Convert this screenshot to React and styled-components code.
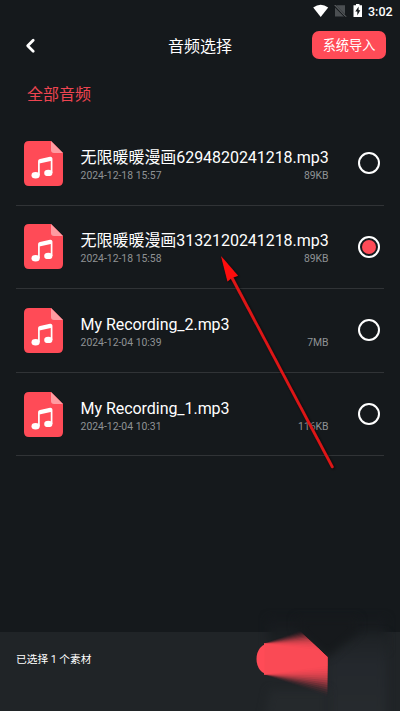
import styled, { createGlobalStyle } from "styled-components";

const GlobalStyle = createGlobalStyle`
  * {
    box-sizing: border-box;
    margin: 0;
    padding: 0;
  }

  body {
    background-color: #15191c;
    color: #fff;
    font-family: Roboto, "Noto Sans CJK SC", sans-serif;
    overflow: hidden;
  }

  button {
    border: none;
    background: none;
    color: inherit;
    font-family: inherit;
  }
`;

const StyledScreen = styled.div`
  position: relative;
  width: 400px;
  height: 711px;
  display: flex;
  flex-direction: column;
  background-color: #15191c;
  overflow: hidden;
`;

const StyledStatusBar = styled.div`
  height: 22px;
  padding-right: 6px;
  display: flex;
  align-items: center;
  justify-content: flex-end;
`;

const StyledStatusIcons = styled.svg`
  width: 52px;
  height: 22px;
  margin-right: 3px;
`;

const StyledClock = styled.span`
  width: 26px;
  padding-top: 1px;
  font-size: 12.5px;
  line-height: 22px;
  font-weight: 500;
  white-space: nowrap;
`;

const StyledHeader = styled.header`
  height: 48px;
  padding: 0 14px 2px 16px;
  display: grid;
  grid-template-columns: 1fr 66px 1fr;
  align-items: center;
`;

const StyledBackButton = styled.button`
  width: 28px;
  height: 28px;
`;

const StyledPageTitle = styled.h1`
  padding-top: 3px;
  font-size: 16px;
  line-height: 24px;
  font-weight: 400;
`;

const StyledImportButton = styled.button`
  justify-self: end;
  width: 74px;
  height: 28px;
  padding-top: 1px;
  border-radius: 7px;
  background-color: #ff4b57;
  font-size: 13.2px;
  line-height: 27px;
  white-space: nowrap;
`;

const StyledSectionTitle = styled.h2`
  height: 52px;
  padding: 13px 27px 0;
  color: #ee4551;
  font-size: 16px;
  line-height: 24px;
  font-weight: 400;
`;

const StyledList = styled.ul`
  flex: 1;
  padding: 0 16px;
  list-style: none;
`;

const StyledTrack = styled.li`
  height: 83.6px;
  padding: 0 4px 0 8px;
  display: flex;
  align-items: center;
  border-bottom: 1px solid #303336;
`;

const StyledFileIcon = styled.svg`
  width: 39px;
  height: 45px;
  flex-shrink: 0;
`;

const StyledTrackInfo = styled.div`
  width: 248px;
  padding-top: 3px;
  margin: 0 29px 0 17.6px;
`;

const StyledTrackName = styled.p`
  font-size: 16px;
  line-height: 22px;
  letter-spacing: -0.05px;
  white-space: nowrap;
`;

const StyledTrackMeta = styled.div`
  display: flex;
  justify-content: space-between;
  color: #8f9294;
  font-size: 10.4px;
  line-height: 14px;
`;

const StyledRadio = styled.span`
  width: 22px;
  height: 22px;
  flex-shrink: 0;
  display: flex;
  align-items: center;
  justify-content: center;
  border: 2px solid #fff;
  border-radius: 50%;

  &::after {
    content: "";
    width: 14px;
    height: 14px;
    border-radius: 50%;
    background-color: ${(props) => (props.$checked ? "#ff4b57" : "transparent")};
  }
`;

const StyledFooter = styled.footer`
  height: 79px;
  padding: 18px 16px;
  background-color: #202427;
  font-size: 10.7px;
  line-height: 20px;
`;

const StyledArrow = styled.svg`
  position: absolute;
  left: 210px;
  top: 245px;
`;

const StyledGlow = styled.svg`
  position: absolute;
  left: 220px;
  top: 580px;
`;

const tracks = [
  {
    name: "无限暖暖漫画6294820241218.mp3",
    date: "2024-12-18 15:57",
    size: "89KB",
  },
  {
    name: "无限暖暖漫画3132120241218.mp3",
    date: "2024-12-18 15:58",
    size: "89KB",
    checked: true,
  },
  { name: "My Recording_2.mp3", date: "2024-12-04 10:39", size: "7MB" },
  { name: "My Recording_1.mp3", date: "2024-12-04 10:31", size: "116KB" },
];

const fanSteps = Array.from({ length: 14 }, (_, i) => i / 13);

function StatusBar() {
  return (
    <StyledStatusBar>
      <StyledStatusIcons viewBox="0 0 52 22">
        <path d="M.2 7.4Q7.7 2 15.2 7.4L7.7 17Z" fill="#fff" />
        <path d="M23.5 5.2H32V16.5H22V6.7Z" fill="#4b4f52" />
        <path d="M21 5L33 17" stroke="#15191c" strokeWidth="2.4" />
        <path d="M21.7 5L33 16.7" stroke="#777a7c" strokeWidth="1" />
        <path d="M40.5 5.3H43V4H46.5V5.3H49V17H40.5Z" fill="#fff" />
        <path d="M45.6 6.5L42.3 11.6H44.3V15.4L47.3 10.3H45.6Z" fill="#15191c" />
      </StyledStatusIcons>
      <StyledClock>3:02</StyledClock>
    </StyledStatusBar>
  );
}

function FileIcon() {
  return (
    <StyledFileIcon viewBox="0 0 39 45">
      <path
        d="M5 0H27L39 12V40Q39 45 34 45H5Q0 45 0 40V5Q0 0 5 0Z"
        fill="#ff4b57"
      />
      <path d="M27 0L39 12H30Q27 12 27 9Z" fill="#ff9ba1" />
      <ellipse cx="11.6" cy="34.2" rx="4.1" ry="3.2" fill="#fff" />
      <ellipse cx="24.3" cy="31.9" rx="4.1" ry="3.2" fill="#fff" />
      <path
        d="M14.9 34V20.6Q14.9 19.2 16.2 18.9L26.2 16.7Q27.6 16.5 27.6 17.8V32"
        fill="none"
        stroke="#fff"
        strokeWidth="1.7"
        strokeLinejoin="round"
      />
      <path d="M15 20.8L27.5 18.1" stroke="#fff" strokeWidth="3.6" />
    </StyledFileIcon>
  );
}

function TrackItem({ track }) {
  const { name, date, size, checked } = track;

  return (
    <StyledTrack>
      <FileIcon />
      <StyledTrackInfo>
        <StyledTrackName>{name}</StyledTrackName>
        <StyledTrackMeta>
          <span>{date}</span>
          <span>{size}</span>
        </StyledTrackMeta>
      </StyledTrackInfo>
      <StyledRadio $checked={checked} />
    </StyledTrack>
  );
}

function PointerArrow() {
  return (
    <StyledArrow width="130" height="230" viewBox="210 245 130 230">
      <defs>
        <filter id="arrow-shadow">
          <feDropShadow dx="1" dy="1" stdDeviation="1.5" floodOpacity="0.7" />
        </filter>
      </defs>
      <g filter="url(#arrow-shadow)">
        <path
          d="M231 276L332.3 466.8"
          stroke="#dd1418"
          strokeWidth="2.8"
          strokeLinecap="round"
        />
        <path d="M221 256L238 275.8L231.5 278L227.5 281.5Z" fill="#ff1010" />
      </g>
    </StyledArrow>
  );
}

function Glow() {
  return (
    <StyledGlow width="180" height="131" viewBox="220 580 180 131">
      <defs>
        <filter
          id="soft"
          x="-30%"
          y="-30%"
          width="160%"
          height="160%"
          colorInterpolationFilters="sRGB"
        >
          <feGaussianBlur stdDeviation="4" />
        </filter>
        <linearGradient id="shade" x1="0" y1="0" x2="0" y2="1">
          <stop offset="0" stopColor="#16191d" />
          <stop offset="0.5" stopColor="#191d20" />
          <stop offset="1" stopColor="#202427" />
        </linearGradient>
        <linearGradient id="haze" x1="0" y1="0" x2="0" y2="1">
          <stop offset="0" stopColor="#1e2225" />
          <stop offset="0.35" stopColor="#24282d" />
          <stop offset="1" stopColor="#272b2e" />
        </linearGradient>
        <clipPath id="left-side">
          <path d="M264 593V711H327.5V657L298 629L290 620Z" />
        </clipPath>
        <clipPath id="pill-end">
          <rect x="250" y="640" width="14.5" height="40" />
        </clipPath>
      </defs>
      <path d="M268 618H386V650H268Z" fill="url(#shade)" filter="url(#soft)" />
      <path
        d="M328 657L362 634H386V720H328Z"
        fill="url(#haze)"
        filter="url(#soft)"
      />
      <path
        d="M270 690L328 690V720H264Z"
        fill="#25292c"
        filter="url(#soft)"
      />
      <path
        d="M296 628L327.5 657L358 630V618H296Z"
        fill="#16191c"
        filter="url(#soft)"
      />
      <g clipPath="url(#left-side)">
        {fanSteps.map((step) => (
          <path
            key={step}
            d={`M263.5 643.5L328 ${620 + step * 31}V${697 - step * 31}L263.5 674.5Z`}
            fill="#ff4b57"
            fillOpacity={0.02 + step * 0.42}
          />
        ))}
      </g>
      <rect
        x="256.5"
        y="643.5"
        width="50"
        height="31"
        rx="12"
        ry="15.5"
        fill="#ff4b57"
        clipPath="url(#pill-end)"
      />
    </StyledGlow>
  );
}

function App() {
  return (
    <>
      <GlobalStyle />
      <StyledScreen>
        <StatusBar />
        <StyledHeader>
          <StyledBackButton>
            <svg width="28" height="28" viewBox="0 0 28 28">
              <path
                d="M17.2 9.2L11.7 14.7L17.2 20.2"
                fill="none"
                stroke="#fff"
                strokeWidth="2.8"
                strokeLinecap="round"
                strokeLinejoin="round"
              />
            </svg>
          </StyledBackButton>
          <StyledPageTitle>音频选择</StyledPageTitle>
          <StyledImportButton>系统导入</StyledImportButton>
        </StyledHeader>
        <StyledSectionTitle>全部音频</StyledSectionTitle>
        <StyledList>
          {tracks.map((track) => (
            <TrackItem key={track.name} track={track} />
          ))}
        </StyledList>
        <StyledFooter>已选择 1 个素材</StyledFooter>
        <PointerArrow />
        <Glow />
      </StyledScreen>
    </>
  );
}

export default App;
